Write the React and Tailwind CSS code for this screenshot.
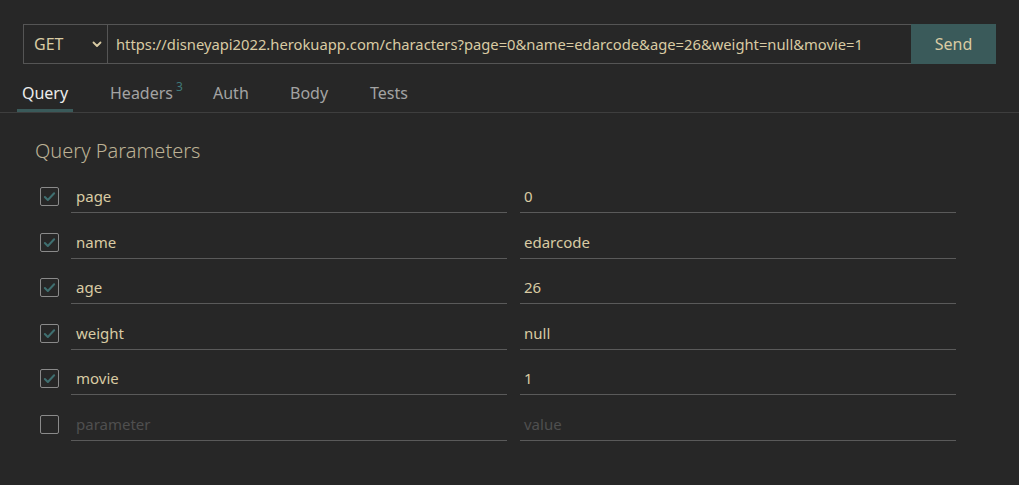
import React from 'react';

const params = [
  { key: 'page', value: '0', on: true },
  { key: 'name', value: 'edarcode', on: true },
  { key: 'age', value: '26', on: true },
  { key: 'weight', value: 'null', on: true },
  { key: 'movie', value: '1', on: true },
];

const Check = ({ on }) => (
  <div className="w-[19px] h-[19px] shrink-0 rounded-[2px] border border-[#8a8a8a] flex items-center justify-center">
    {on && (
      <svg width="13" height="13" viewBox="0 0 14 14" fill="none">
        <path d="M2 7.5l3.2 3.2L12 3.5" stroke="#3f6f70" strokeWidth="2.2" strokeLinecap="round" strokeLinejoin="round" />
      </svg>
    )}
  </div>
);

const Row = ({ k, v, on, empty }) => (
  <div className="flex items-center h-[45.5px]">
    <div className="w-[71px] pl-[40px] flex items-center">
      <Check on={on} />
    </div>
    <div className={`w-[436px] h-[33px] pl-[5px] flex items-center border-b border-[#5a5a5a] ${empty ? 'text-[#4f4f4f]' : 'text-[#d9cba3]'}`}>
      {k}
    </div>
    <div className={`ml-[13px] w-[436px] h-[33px] pl-[4px] flex items-center border-b border-[#5a5a5a] ${empty ? 'text-[#4f4f4f]' : 'text-[#d9cba3]'}`}>
      {v}
    </div>
  </div>
);

const tabs = [
  { name: 'Query', cls: 'w-[56px] justify-center text-[#ececec] border-b-[3px] border-[#3a5a5a]' },
  { name: 'Headers', cls: 'ml-[37px] w-[103px] text-[#a3a3a3] border-b-[3px] border-transparent' },
  { name: 'Auth', cls: 'w-[77px] text-[#a3a3a3] border-b-[3px] border-transparent' },
  { name: 'Body', cls: 'w-[80px] text-[#a3a3a3] border-b-[3px] border-transparent' },
  { name: 'Tests', cls: 'w-[60px] text-[#a3a3a3] border-b-[3px] border-transparent' },
];

export default function App() {
  return (
    <div className="w-[1019px] h-[485px] bg-[#272727] text-[15px] overflow-hidden" style={{ fontFamily: '"Noto Sans", "Open Sans", sans-serif' }}>
      {/* request bar */}
      <div className="pt-[24px] px-[23px] flex h-[64px]">
        <div className="flex h-[40px] flex-1 border border-[#555] border-r-0">
          <div className="w-[84px] border-r border-[#555] flex items-center justify-between pl-[10px] pr-[4px] text-[#d9cba3] text-[16px]">
            <span>GET</span>
            <svg width="12" height="12" viewBox="0 0 12 12" fill="none">
              <path d="M2.5 4.5L6 8l3.5-3.5" stroke="#d9cba3" strokeWidth="1.8" strokeLinecap="round" strokeLinejoin="round" />
            </svg>
          </div>
          <div className="flex-1 flex items-center pl-[8px] text-[#d9cba3] text-[14.75px] whitespace-nowrap overflow-hidden">
            https://disneyapi2022.herokuapp.com/characters?page=0&amp;name=edarcode&amp;age=26&amp;weight=null&amp;movie=1
          </div>
        </div>
        <button className="w-[85px] h-[40px] bg-[#3a5a5a] text-[#d9cba3] text-[16px]">Send</button>
      </div>

      {/* tabs */}
      <div className="flex h-[49px] border-b border-[#3e3e3e] pl-[17px]">
        {tabs.map((t) => (
          <div key={t.name} className={`h-full flex items-center pt-[12px] text-[16px] ${t.cls}`}>
            {t.name}
            {t.name === 'Headers' && <span className="relative -top-[6px] text-[#3f7a7a] text-[12px] ml-[3px]">3</span>}
          </div>
        ))}
      </div>

      {/* query params */}
      <div className="pt-[26px]">
        <div className="pl-[35px] text-[20px] font-light text-[#bcb195] leading-[24px]">Query Parameters</div>
        <div className="mt-[11px]">
          {params.map((p) => (
            <Row key={p.key} k={p.key} v={p.value} on={p.on} />
          ))}
          <Row k="parameter" v="value" on={false} empty />
        </div>
      </div>
    </div>
  );
}
